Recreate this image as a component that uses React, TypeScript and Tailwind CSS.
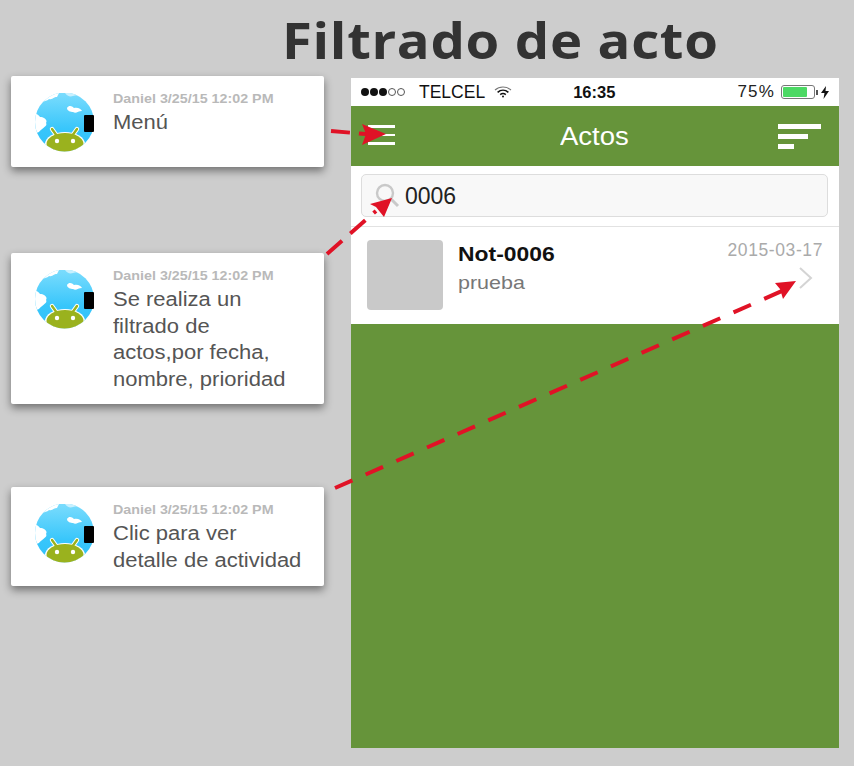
const sans = "font-['Liberation_Sans',Arial,sans-serif]";

function Avatar() {
  return (
    <svg width="64" height="60" viewBox="0 0 64 60" className="shrink-0">
      <defs>
        <clipPath id="globe"><circle cx="31.5" cy="29" r="29.5" /></clipPath>
        <linearGradient id="sky" x1="0" y1="0" x2="0" y2="1">
          <stop offset="0" stopColor="#7bdcfd" />
          <stop offset="0.6" stopColor="#38c6fb" />
          <stop offset="1" stopColor="#30c0f8" />
        </linearGradient>
      </defs>
      <g clipPath="url(#globe)">
        <rect x="0" y="0" width="64" height="60" fill="url(#sky)" />
        <path d="M0 0 L26 0 L24 4 C20 4 20 7 16 6 C13 9 10 7 7 11 L0 14 Z" fill="#ffffff" />
        <path d="M32 0 L62 0 L62 8 C54 4 46 1 40 3 C37 4 34 3 32 0 Z" fill="#c8f0fe" />
        <path d="M-2 20 C2 19 6 22 7 24 C11 24 15 27 13 30 C15 33 9 35 6 39 L-2 42 Z" fill="#ffffff" />
        <path d="M34 15 C36 12 39 13 41 15 C45 14 48 16 49 18 C45 18 43 21 40 19 C38 19 34 18 34 15 Z" fill="#ffffff" />
        <path d="M19 36 L24 43 M44 36 L39 43" stroke="#ffffff" strokeWidth="4.4" strokeLinecap="round" />
        <ellipse cx="32" cy="51" rx="20" ry="12" fill="#ffffff" />
        <path d="M19 36 L24 43 M44 36 L39 43" stroke="#9ab21e" strokeWidth="2.4" strokeLinecap="round" />
        <ellipse cx="32" cy="51" rx="18.5" ry="11" fill="#9ab21e" />
        <circle cx="24" cy="48" r="2.2" fill="#ffffff" />
        <circle cx="40" cy="48" r="2.2" fill="#ffffff" />
      </g>
      <rect x="51" y="22" width="10" height="17" rx="1" fill="#000000" />
    </svg>
  );
}

function Note({ lines, className }: { lines: string[]; className: string }) {
  return (
    <div className={`w-[313px] bg-white rounded-[2px] shadow-[0_4px_8px_rgba(0,0,0,0.45)] flex pl-[22px] pt-[15px] ${className}`}>
      <div className="w-[80px] pt-[2px]"><Avatar /></div>
      <div>
        <div className={`text-[13px] leading-[16px] font-bold text-[#b9b9b9] origin-left scale-x-[1.1] whitespace-nowrap ${sans}`}>Daniel 3/25/15 12:02 PM</div>
        <div className={`text-[20px] leading-[26.5px] text-[#555555] mt-[2px] origin-left scale-x-[1.1] whitespace-nowrap ${sans}`}>
          {lines.map((l) => <div key={l}>{l}</div>)}
        </div>
      </div>
    </div>
  );
}

function Wifi() {
  return (
    <svg width="18" height="14" viewBox="0 0 18 14" fill="none" stroke="#111" strokeWidth="1.6">
      <path d="M1 5 C5.5 1 12.5 1 17 5" stroke="#777" strokeWidth="1.1" />
      <path d="M3.6 7.3 C6.8 4.6 11.2 4.6 14.4 7.3" />
      <path d="M6.2 9.6 C7.8 8.4 10.2 8.4 11.8 9.6" />
      <circle cx="9" cy="11.6" r="1" fill="#111" stroke="none" />
    </svg>
  );
}

function Arrows() {
  const dash = "#e01226";
  return (
    <svg className="absolute inset-0 pointer-events-none" width="854" height="766" viewBox="0 0 854 766" fill="none">
      <g stroke={dash} strokeWidth="4">
        <path d="M331 131 L366 134" strokeDasharray="19 9" />
        <path d="M327 254 L376 211" strokeDasharray="20 11" />
        <path d="M335 488 L782 291" strokeDasharray="19 14.5" />
      </g>
      <path d="M362 124 L386 134 L362 145 L366 134 Z" fill={dash} />
      <path d="M392 198 L370 204 L376 207 L384 217 Z" fill={dash} />
      <path d="M796 281 L775 283 L780 289 L783 299 Z" fill={dash} />
    </svg>
  );
}

export default function App() {
  return (
    <div className="relative w-[854px] h-[766px] bg-[#cdcdcd] overflow-hidden">
      <h1 className="h-[76px] pl-[282px] pt-[10px] text-[50px] leading-[60px] font-bold text-[#333333] font-['Open_Sans',sans-serif] tracking-[0.6px] origin-[282px_0] scale-x-[1.09]">
        Filtrado de acto
      </h1>
      <div className="flex">
        <div className="w-[351px] pl-[11px] flex flex-col">
          <Note lines={["Menú"]} className="h-[91px]" />
          <Note lines={["Se realiza un", "filtrado de", "actos,por fecha,", "nombre, prioridad"]} className="h-[151px] mt-[86px]" />
          <Note lines={["Clic para ver", "detalle de actividad"]} className="h-[99px] mt-[83px]" />
        </div>
        <div className={`w-[488px] h-[670px] mt-[2px] bg-[#66943a] flex flex-col ${sans}`}>
          <div className="h-[28px] bg-white flex items-center px-[10px] text-[#111] relative">
            <div className="flex items-center gap-[1px] w-[56px]">
              {[0, 1, 2].map((i) => <span key={i} className="w-[8px] h-[8px] rounded-full bg-[#111]" />)}
              {[0, 1].map((i) => <span key={i} className="w-[8px] h-[8px] rounded-full border border-[#555]" />)}
            </div>
            <span className="text-[17.5px] ml-[2px]">TELCEL</span>
            <span className="ml-[9px]"><Wifi /></span>
            <span className="text-[16.5px] font-bold ml-[61px]">16:35</span>
            <span className="text-[17px] ml-auto tracking-[1.2px] text-[#222]">75%</span>
            <div className="ml-[6px] w-[34px] h-[14px] rounded-[3px] border border-[#777] p-[1px] flex">
              <div className="w-[24px] bg-[#4cd964] rounded-[1px]" />
            </div>
            <span className="w-[2px] h-[5px] bg-[#555] ml-[1px]" />
            <svg width="8" height="13" viewBox="0 0 8 13" className="ml-[3px]"><path d="M5 0 L0 7 L3.5 7 L2.5 13 L8 5 L4.5 5 Z" fill="#111" /></svg>
          </div>
          <div className="h-[60px] bg-[#66943a] flex items-center pl-[17px] pr-[18px] relative">
            <div className="flex flex-col gap-[6px] mt-[-2px]">
              <span className="w-[27px] h-[2.5px] bg-white" />
              <span className="w-[27px] h-[2.5px] bg-white" />
              <span className="w-[27px] h-[2.5px] bg-white" />
            </div>
            <span className="text-[25px] text-white ml-[165px] mt-[2px] origin-left scale-x-[1.1]">Actos</span>
            <div className="flex flex-col gap-[5px] ml-auto">
              <span className="w-[43px] h-[5px] bg-white" />
              <span className="w-[30px] h-[5px] bg-white" />
              <span className="w-[16px] h-[5px] bg-white" />
            </div>
          </div>
          <div className="h-[61px] bg-white pl-[10px] pr-[11px] pt-[8px] border-b border-[#e2e2e2]">
            <div className="h-[43px] bg-[#f8f8f8] border border-[#dddddd] rounded-[5px] flex items-center pl-[12px]">
              <svg width="26" height="26" viewBox="0 0 26 26" fill="none" stroke="#c9c9c9" strokeWidth="2.4">
                <circle cx="11" cy="10" r="8" />
                <path d="M17 16 L24 23" strokeWidth="3" />
              </svg>
              <span className="text-[23px] text-[#222] ml-[5px] mt-[2px]">0006</span>
            </div>
          </div>
          <div className="h-[97px] bg-white flex pl-[16px] pt-[13px] pr-[16px] relative">
            <div className="w-[76px] h-[70px] rounded-[4px] bg-[#c9c9c9]" />
            <div className="ml-[15px]">
              <div className="text-[21px] leading-[28px] font-bold text-[#111] origin-left scale-x-[1.09]">Not-0006</div>
              <div className="text-[19px] leading-[28px] text-[#777] mt-[1px] origin-left scale-x-[1.13]">prueba</div>
            </div>
            <div className="ml-auto flex flex-col items-end">
              <div className="text-[17.5px] leading-[20px] text-[#aaaaaa] tracking-[0.6px]">2015-03-17</div>
              <svg width="14" height="22" viewBox="0 0 14 22" fill="none" stroke="#d4d4d4" strokeWidth="2" className="mt-[7px] mr-[10px]">
                <path d="M1 1 L12 11 L1 21" />
              </svg>
            </div>
          </div>
        </div>
      </div>
      <Arrows />
    </div>
  );
}
